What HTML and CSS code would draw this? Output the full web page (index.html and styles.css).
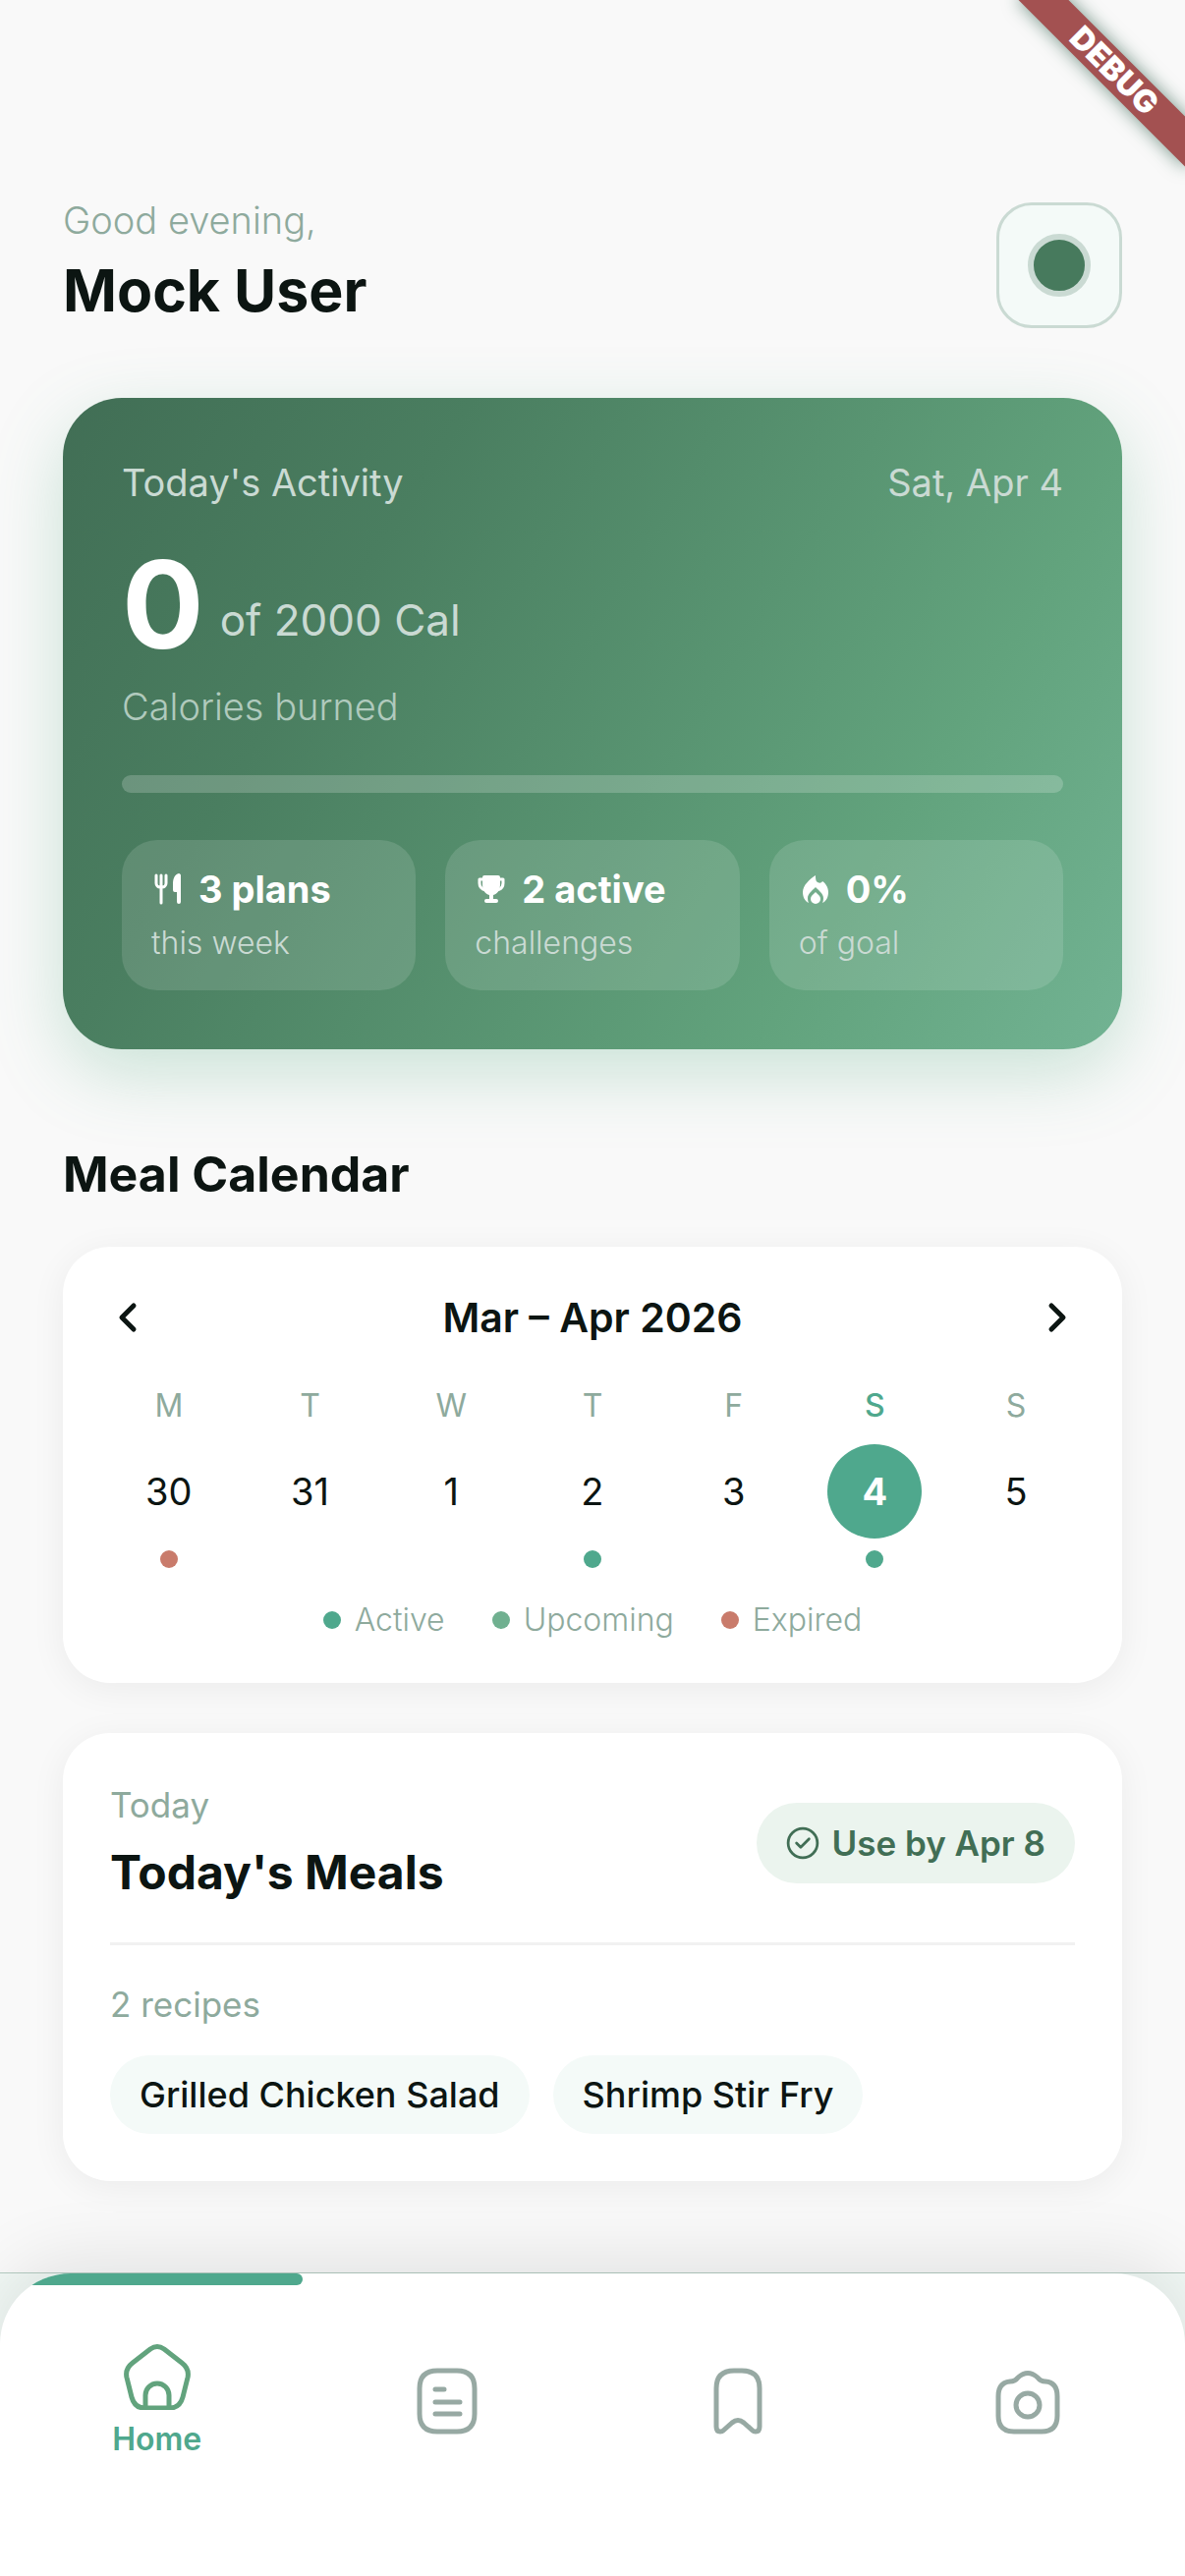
FILE: index.html
```
<!DOCTYPE html>
<html lang="en">
<head>
  <meta charset="UTF-8">
  <meta name="viewport" content="width=device-width, initial-scale=1.0">
  <title>Home</title>
  <link rel="stylesheet" href="styles.css">
</head>
<body>
  <div class="ribbon">DEBUG</div>

  <main class="page">
    <header class="header">
      <div>
        <p class="greeting">Good evening,</p>
        <h1 class="user-name">Mock User</h1>
      </div>
      <button class="avatar" type="button" aria-label="Profile"><span class="avatar-dot"></span></button>
    </header>

    <section class="activity">
      <div class="activity-head">
        <h2>Today's Activity</h2>
        <span>Sat, Apr 4</span>
      </div>
      <div class="calories">
        <span class="calories-value">0</span>
        <span class="calories-goal">of 2000 Cal</span>
      </div>
      <p class="calories-label">Calories burned</p>
      <div class="progress" role="progressbar" aria-label="Calories burned" aria-valuenow="0" aria-valuemin="0" aria-valuemax="2000"></div>
      <div class="stats">
        <div class="stat">
          <div class="stat-value">
            <svg viewBox="0 0 34 34" aria-hidden="true">
              <path d="M5 3v8a4 4 0 0 0 4 4h2a4 4 0 0 0 4-4V3M10 3v28" fill="none" stroke="currentColor" stroke-width="3" stroke-linecap="round"/>
              <path d="M30 3v27a2 2 0 0 1-4 0V20h-2a2 2 0 0 1-2-2V11c0-5 2-9 6-10 1 0 2 1 2 2z" fill="currentColor"/>
            </svg>
            3 plans
          </div>
          <div class="stat-label">this week</div>
        </div>
        <div class="stat">
          <div class="stat-value">
            <svg viewBox="0 0 34 34" aria-hidden="true">
              <path d="M10 3h14a2 2 0 0 1 2 2v7c0 6-3 10-7 11v4h3a2 2 0 0 1 0 4H12a2 2 0 0 1 0-4h3v-4c-4-1-7-5-7-11V5a2 2 0 0 1 2-2z" fill="currentColor"/>
              <path d="M8 7H5v4c0 4 2 6 6 7M26 7h3v4c0 4-2 6-6 7" fill="none" stroke="currentColor" stroke-width="3" stroke-linejoin="round"/>
            </svg>
            2 active
          </div>
          <div class="stat-label">challenges</div>
        </div>
        <div class="stat">
          <div class="stat-value">
            <svg viewBox="0 0 34 34" aria-hidden="true">
              <path d="M17 3c-6 4-13 10-13 17 0 5 2 9 6 11-1-2-1-4-1-5 0-4 4-7 8-11 4 4 8 7 8 11 0 1 0 3-1 5 4-2 6-6 6-11 0-5-3-9-6-11-1 2-3 2-5 1-2-1-2-4-2-7z" fill="currentColor"/>
              <path d="M17 20c-3 3-5 4-5 7a5 5 0 0 0 10 0c0-3-2-4-5-7z" fill="currentColor"/>
            </svg>
            0%
          </div>
          <div class="stat-label">of goal</div>
        </div>
      </div>
    </section>

    <h2 class="section-title">Meal Calendar</h2>

    <section class="card calendar">
      <div class="calendar-head">
        <button class="arrow" type="button" aria-label="Previous week">
          <svg viewBox="0 0 60 60"><path d="M36 18L24 30l12 12"/></svg>
        </button>
        <h3>Mar – Apr 2026</h3>
        <button class="arrow" type="button" aria-label="Next week">
          <svg viewBox="0 0 60 60"><path d="M24 18l12 12-12 12"/></svg>
        </button>
      </div>
      <table class="week">
        <thead>
          <tr>
            <th>M</th>
            <th>T</th>
            <th>W</th>
            <th>T</th>
            <th>F</th>
            <th class="today">S</th>
            <th>S</th>
          </tr>
        </thead>
        <tbody>
          <tr>
            <td><button class="day" type="button">30</button><span class="dot expired"></span></td>
            <td><button class="day" type="button">31</button></td>
            <td><button class="day" type="button">1</button></td>
            <td><button class="day" type="button">2</button><span class="dot active"></span></td>
            <td><button class="day" type="button">3</button></td>
            <td><button class="day selected" type="button">4</button><span class="dot active"></span></td>
            <td><button class="day" type="button">5</button></td>
          </tr>
        </tbody>
      </table>
      <ul class="legend">
        <li><span class="dot active"></span>Active</li>
        <li><span class="dot upcoming"></span>Upcoming</li>
        <li><span class="dot expired"></span>Expired</li>
      </ul>
    </section>

    <section class="card meals">
      <div class="meals-head">
        <div>
          <p class="meals-day">Today</p>
          <h2>Today's Meals</h2>
        </div>
        <span class="badge">
          <svg viewBox="0 0 32 32" aria-hidden="true"><circle cx="16" cy="16" r="14"/><path d="M10 16l4 4 8-8"/></svg>
          Use by Apr 8
        </span>
      </div>
      <p class="recipe-count">2 recipes</p>
      <div class="chips">
        <button class="chip" type="button">Grilled Chicken Salad</button>
        <button class="chip" type="button">Shrimp Stir Fry</button>
      </div>
    </section>
  </main>

  <div class="nav-wrap">
    <nav class="nav">
      <div class="indicator"></div>
      <a class="nav-item current" href="#home">
        <svg viewBox="0 0 68 68" aria-hidden="true">
          <path d="M27 6q7-5 14 0l18 14q8 6 6 15l-5 20q-3 11-13 11H21q-10 0-13-11L3 35q-2-9 6-15z"/>
          <path d="M22 65V53a12 12 0 0 1 24 0v12"/>
        </svg>
        Home
      </a>
      <a class="nav-item" href="#plans" aria-label="Plans">
        <svg viewBox="0 0 68 68" aria-hidden="true">
          <path d="M24 3h20q18 0 18 18v26q0 18-18 18H24Q6 65 6 47V21Q6 3 24 3z"/>
          <path d="M22 22h9M22 35h25M22 47h25"/>
        </svg>
      </a>
      <a class="nav-item" href="#saved" aria-label="Saved">
        <svg viewBox="0 0 68 68" aria-hidden="true">
          <path d="M12 21Q12 3 30 3h8q18 0 18 18v39q0 5-4 5-2 0-3-1l-9-8q-6-5-12 0l-9 8q-1 1-3 1-4 0-4-5z"/>
        </svg>
      </a>
      <a class="nav-item" href="#scan" aria-label="Scan">
        <svg viewBox="0 0 68 68" aria-hidden="true">
          <path d="M20 65h28q16 0 16-16V29q0-14-12-15-5 0-8-4-10-9-20 0-3 4-8 4Q4 15 4 29v20q0 16 16 16z"/>
          <circle cx="34" cy="38" r="12"/>
        </svg>
      </a>
    </nav>
  </div>
</body>
</html>
```
FILE: styles.css
```
* {
  box-sizing: border-box;
}
body {
  position: relative;
  display: flex;
  flex-direction: column;
  min-height: 100vh;
  margin: 0;
  overflow-x: hidden;
  font-family: Inter, "Open Sans", sans-serif;
  color: #0c1512;
  background-color: #f9f9f9;
}
h1, h2, h3, p, ul {
  margin: 0;
  padding: 0;
}
button {
  padding: 0;
  border: none;
  font-family: inherit;
  color: inherit;
  background: none;
  cursor: pointer;
}

/* corner ribbon */
.ribbon {
  position: absolute;
  top: 54px;
  right: -48px;
  width: 240px;
  height: 36px;
  line-height: 36px;
  font-size: 32px;
  font-weight: 900;
  text-align: center;
  color: #fff;
  background-color: #a35151;
  box-shadow: 0 0 18px rgba(30, 80, 60, 0.6);
  transform: rotate(45deg);
}

.page {
  padding: 198px 64px 60px;
}

.header {
  display: flex;
  justify-content: space-between;
  align-items: center;
}
.greeting {
  font-size: 38px;
  line-height: 52px;
  font-weight: 300;
  color: #8eaa9d;
}
.user-name {
  font-size: 59px;
  line-height: 92px;
  font-weight: 700;
}
.avatar {
  display: flex;
  align-items: center;
  justify-content: center;
  width: 128px;
  height: 128px;
  border: 3px solid #cadad3;
  border-radius: 36px;
  background-color: #f4faf8;
}
.avatar-dot {
  width: 64px;
  height: 64px;
  border: 6px solid #cadad3;
  border-radius: 50%;
  background-color: #477a5d;
}

/* activity card */
.activity {
  margin-top: 63px;
  padding: 60px;
  border-radius: 60px;
  color: #fff;
  background: linear-gradient(122deg, #416e55, #4a7e60 28%, #62a37d 75%, #72b393);
  box-shadow: 0 24px 72px rgba(80, 168, 125, 0.28);
}
.activity-head {
  display: flex;
  justify-content: space-between;
  font-size: 38px;
  line-height: 52px;
  color: #cadad3;
}
.activity-head h2 {
  font-size: 38px;
  font-weight: 400;
}
.calories {
  display: flex;
  align-items: flex-end;
  gap: 16px;
  margin-top: 36px;
}
.calories-value {
  font-size: 124px;
  line-height: 124px;
  font-weight: 700;
}
.calories-goal {
  padding-bottom: 16px;
  font-size: 44px;
  line-height: 60px;
  color: #cadad3;
}
.calories-label {
  margin-top: 18px;
  font-size: 38px;
  line-height: 48px;
  font-weight: 300;
  color: #b0cabd;
}
.progress {
  height: 18px;
  margin-top: 46px;
  border-radius: 9px;
  background-color: rgba(255, 255, 255, 0.2);
}
.stats {
  display: grid;
  grid-template-columns: repeat(3, 1fr);
  gap: 30px;
  margin-top: 48px;
}
.stat {
  padding: 24px 30px;
  border-radius: 36px;
  background-color: rgba(255, 255, 255, 0.13);
}
.stat-value {
  display: flex;
  align-items: center;
  gap: 14px;
  font-size: 38px;
  line-height: 52px;
  font-weight: 700;
}
.stat-value svg {
  width: 34px;
  height: 34px;
}
.stat-label {
  margin-top: 5px;
  font-size: 32px;
  line-height: 48px;
  font-weight: 300;
  color: #cadad3;
}

.section-title {
  margin-top: 97px;
  font-size: 50px;
  line-height: 60px;
  font-weight: 700;
}
.card {
  border-radius: 48px;
  background-color: #fff;
  box-shadow: 0 6px 36px rgba(12, 21, 18, 0.06);
}

/* calendar */
.calendar {
  margin-top: 44px;
  padding: 36px 36px 42px;
}
.calendar-head {
  display: flex;
  align-items: center;
  justify-content: space-between;
  height: 72px;
}
.calendar-head h3 {
  font-size: 41px;
  font-weight: 600;
}
.arrow {
  width: 60px;
  height: 60px;
}
.arrow svg {
  display: block;
  fill: none;
  stroke: currentColor;
  stroke-width: 5;
  stroke-linecap: round;
  stroke-linejoin: round;
}
.week {
  width: 100%;
  margin-top: 32px;
  table-layout: fixed;
  border-collapse: collapse;
}
.week th {
  padding: 0 0 17px;
  font-size: 32px;
  line-height: 44px;
  font-weight: 400;
  color: #8eaa9d;
}
.week .today {
  font-weight: 500;
  color: #4fa88d;
}
.week td {
  height: 126px;
  padding: 0;
  vertical-align: top;
}
.day {
  display: block;
  width: 96px;
  height: 96px;
  margin: 0 auto;
  border-radius: 50%;
  font-size: 38px;
}
.selected {
  font-weight: 700;
  color: #fff;
  background-color: #4fa88d;
}
.dot {
  display: block;
  width: 18px;
  height: 18px;
  border-radius: 50%;
}
.week .dot {
  margin: 12px auto 0;
}
.active {
  background-color: #4fa88d;
}
.upcoming {
  background-color: #70b090;
}
.expired {
  background-color: #c97b6b;
}
.legend {
  display: flex;
  justify-content: center;
  gap: 48px;
  margin-top: 31px;
  font-size: 32px;
  line-height: 44px;
  font-weight: 300;
  color: #8eaa9d;
  list-style: none;
}
.legend li {
  display: flex;
  align-items: center;
  gap: 14px;
}

/* meals */
.meals {
  margin-top: 51px;
  padding: 48px;
}
.meals-head {
  display: flex;
  align-items: center;
  justify-content: space-between;
  padding-bottom: 37px;
  border-bottom: 3px solid #f1f1f1;
}
.meals-day {
  font-size: 35px;
  line-height: 50px;
  color: #8eaa9d;
}
.meals-head h2 {
  margin-top: 10px;
  font-size: 48px;
  line-height: 68px;
  font-weight: 700;
}
.badge {
  display: flex;
  align-items: center;
  gap: 12px;
  padding: 0 30px;
  border-radius: 41px;
  font-size: 35px;
  line-height: 82px;
  font-weight: 600;
  color: #416e55;
  background-color: #ebf4ee;
}
.badge svg {
  width: 34px;
  height: 34px;
  fill: none;
  stroke: currentColor;
  stroke-width: 2.6;
  stroke-linecap: round;
  stroke-linejoin: round;
}
.recipe-count {
  margin-top: 36px;
  font-size: 35px;
  line-height: 48px;
  color: #8eaa9d;
}
.chips {
  display: flex;
  gap: 24px;
  margin-top: 28px;
}
.chip {
  padding: 0 30px;
  border-radius: 40px;
  font-size: 36px;
  line-height: 80px;
  font-weight: 500;
  background-color: #f4faf8;
}

/* bottom nav */
.nav-wrap {
  margin-top: auto;
  border-top: 1px solid #b5ccc2;
  background-color: #f1f8f5;
}
.nav {
  position: relative;
  display: grid;
  grid-template-columns: repeat(4, 1fr);
  height: 308px;
  padding: 0 12px 48px;
  border-radius: 72px 72px 0 0;
  overflow: hidden;
  background-color: #fff;
  box-shadow: 0 -12px 72px rgba(12, 21, 18, 0.1);
}
.indicator {
  position: absolute;
  top: 0;
  left: 0;
  width: calc(25% + 6px);
  height: 12px;
  border-radius: 0 6px 6px 0;
  background-color: #4fa88d;
}
.nav-item {
  display: flex;
  flex-direction: column;
  align-items: center;
  justify-content: center;
  gap: 10px;
  font-size: 32px;
  line-height: 40px;
  font-weight: 600;
  color: #97a9a3;
  text-decoration: none;
}
.nav-item svg {
  width: 68px;
  height: 68px;
  fill: none;
  stroke: currentColor;
  stroke-width: 5;
  stroke-linecap: round;
  stroke-linejoin: round;
}
.current {
  color: #4fa88d;
}
.current svg {
  color: #62a37d;
}
```
